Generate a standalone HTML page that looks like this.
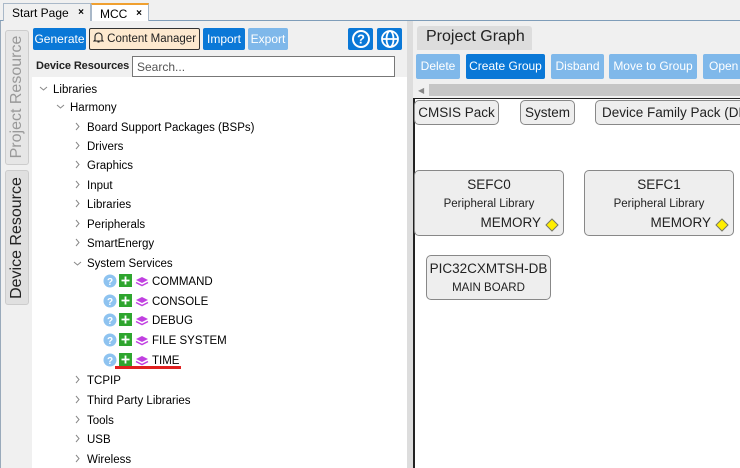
<!DOCTYPE html>
<html><head><style>
*{margin:0;padding:0;box-sizing:border-box}
body{width:740px;height:468px;overflow:hidden;background:#fff;font-family:"Liberation Sans",sans-serif;font-size:12px;color:#000;position:relative}
.a{position:absolute}
.tab{position:absolute;top:3px;height:18px;border:1px solid #a9b8c8;border-bottom:none;font-size:12px;padding:2px 0 0 8px}
.tab b{position:absolute;right:6px;top:3px;font-size:10px}
.btn{position:absolute;height:22px;color:#fff;font-size:12px;text-align:center;line-height:22px;border-radius:2px;white-space:nowrap;overflow:hidden}
.node{position:absolute;background:#eee;border:1px solid #888;border-radius:5px;text-align:center;font-size:13.5px;color:#222;white-space:nowrap;overflow:hidden}
</style></head><body>
<div class="a" style="left:0;top:0;width:740px;height:20px;background:#f0f0f0"></div>
<div class="a" style="left:0;top:20px;width:740px;height:1px;background:#7f9db9"></div>
<div class="tab" style="left:3px;width:88px;background:#f0f0f0">Start Page<b>×</b></div>
<div class="tab" style="left:91px;width:58px;background:#fff;border-top:2px solid #f0a030;height:19px">MCC<b>×</b></div>
<div class="a" style="left:0;top:21px;width:32px;height:447px;background:#f0f0f0;border-left:1px solid #9ab"></div>
<div class="a" style="left:5px;top:30px;width:24px;height:135px;background:#e6e6e6;border:1px solid #ccc;border-radius:3px"></div>
<div class="a" style="left:5px;top:170px;width:24px;height:135px;background:#e0e0e0;border:1px solid #ccc;border-radius:3px"></div>
<div class="a" style="left:17px;top:97px;transform:translate(-50%,-50%) rotate(-90deg);font-size:16px;color:#999;white-space:nowrap">Project Resource</div>
<div class="a" style="left:17px;top:238px;transform:translate(-50%,-50%) rotate(-90deg);font-size:16px;color:#222;white-space:nowrap">Device Resource</div>
<div class="a" style="left:32px;top:21px;width:375px;height:56px;background:#f0f0f0"></div>
<div class="btn" style="left:33px;top:28px;width:53px;background:#0a78d7">Generate</div>
<div class="btn" style="left:89px;top:28px;width:111px;background:#fde9cf;border:1px solid #333;color:#222;line-height:20px;font-size:11.5px"><svg width="11" height="12" viewBox="0 0 11 12" style="vertical-align:-1px" fill="none" stroke="#222" stroke-width="1.1"><path d="M2 9V5.5a3.5 3.5 0 0 1 7 0V9l1 1H1z"/><path d="M4.5 11h2"/></svg> Content Manager</div>
<div class="btn" style="left:203px;top:28px;width:42px;background:#0a78d7">Import</div>
<div class="btn" style="left:248px;top:28px;width:40px;background:#7fb8ea">Export</div>
<div class="btn" style="left:348px;top:28px;width:25px;background:#0a78d7"><svg width="20" height="20" viewBox="0 0 20 20" style="margin-top:1px"><circle cx="10" cy="10" r="8" fill="none" stroke="#fff" stroke-width="2"/><text x="10" y="14.5" text-anchor="middle" fill="#fff" font-size="13" font-weight="bold" font-family="Liberation Sans">?</text></svg></div>
<div class="btn" style="left:377px;top:28px;width:25px;background:#0a78d7"><svg width="20" height="20" viewBox="0 0 20 20" style="margin-top:1px" fill="none" stroke="#fff" stroke-width="1.8"><circle cx="10" cy="10" r="8"/><ellipse cx="10" cy="10" rx="3.5" ry="8"/><line x1="2" y1="10" x2="18" y2="10"/></svg></div>
<div class="a" style="left:36px;top:60px;font-weight:bold;font-size:11px;color:#222;white-space:nowrap;letter-spacing:-0.1px">Device Resources</div>
<div class="a" style="left:132px;top:56px;width:263px;height:21px;border:1px solid #777;background:#fff;font-size:12px;color:#555;padding:3px 4px">Search...</div>
<div class="a" style="left:32px;top:77px;width:375px;height:391px;background:#fff"></div>
<div class="a" style="left:407px;top:21px;width:6px;height:447px;background:#ddd"></div>
<div class="a" style="left:413px;top:21px;width:327px;height:78px;background:#f0f0f0"></div>

<svg class="a" style="left:0;top:0" width="410" height="468">
<g fill="none" stroke="#888" stroke-width="1">
<path d="M40 87l3.5 3 3.5-3M57 105l3.5 3 3.5-3M74 262l3.5 3 3.5-3"/>
<path d="M76 123l3 3.5-3 3.5M76 142l3 3.5-3 3.5M76 161l3 3.5-3 3.5M76 181l3 3.5-3 3.5M76 200l3 3.5-3 3.5M76 220l3 3.5-3 3.5M76 239l3 3.5-3 3.5M76 376l3 3.5-3 3.5M76 396l3 3.5-3 3.5M76 416l3 3.5-3 3.5M76 435l3 3.5-3 3.5M76 455l3 3.5-3 3.5"/>
</g>
<g font-family="Liberation Sans" font-size="11.5" fill="#000">
<text x="53" y="93">Libraries</text>
<text x="70" y="111">Harmony</text>
<text x="87" y="131">Board Support Packages (BSPs)</text>
<text x="87" y="150">Drivers</text>
<text x="87" y="169">Graphics</text>
<text x="87" y="189">Input</text>
<text x="87" y="208">Libraries</text>
<text x="87" y="228">Peripherals</text>
<text x="87" y="247">SmartEnergy</text>
<text x="87" y="267">System Services</text>
<text x="87" y="384">TCPIP</text>
<text x="87" y="404">Third Party Libraries</text>
<text x="87" y="424">Tools</text>
<text x="87" y="443">USB</text>
<text x="87" y="463">Wireless</text>
</g>
<g font-family="Liberation Sans" font-size="11.5">
<g transform="translate(0,281)"><circle cx="110" cy="0" r="6.5" fill="#8ec3f0"/><text x="110" y="4" text-anchor="middle" fill="#fff" font-size="10" font-weight="bold">?</text><rect x="119" y="-7" width="13" height="13" fill="#2ea52e"/><path d="M125.5-4.5v8M121.5-.5h8" stroke="#fff" stroke-width="1.8"/><path d="M136-1l6-3 6 3-6 3z" fill="#c040e0"/><path d="M136 1.5l6 3 6-3" fill="none" stroke="#c040e0" stroke-width="1.5"/><text x="152" y="4">COMMAND</text></g>
<g transform="translate(0,301)"><circle cx="110" cy="0" r="6.5" fill="#8ec3f0"/><text x="110" y="4" text-anchor="middle" fill="#fff" font-size="10" font-weight="bold">?</text><rect x="119" y="-7" width="13" height="13" fill="#2ea52e"/><path d="M125.5-4.5v8M121.5-.5h8" stroke="#fff" stroke-width="1.8"/><path d="M136-1l6-3 6 3-6 3z" fill="#c040e0"/><path d="M136 1.5l6 3 6-3" fill="none" stroke="#c040e0" stroke-width="1.5"/><text x="152" y="4">CONSOLE</text></g>
<g transform="translate(0,320)"><circle cx="110" cy="0" r="6.5" fill="#8ec3f0"/><text x="110" y="4" text-anchor="middle" fill="#fff" font-size="10" font-weight="bold">?</text><rect x="119" y="-7" width="13" height="13" fill="#2ea52e"/><path d="M125.5-4.5v8M121.5-.5h8" stroke="#fff" stroke-width="1.8"/><path d="M136-1l6-3 6 3-6 3z" fill="#c040e0"/><path d="M136 1.5l6 3 6-3" fill="none" stroke="#c040e0" stroke-width="1.5"/><text x="152" y="4">DEBUG</text></g>
<g transform="translate(0,340)"><circle cx="110" cy="0" r="6.5" fill="#8ec3f0"/><text x="110" y="4" text-anchor="middle" fill="#fff" font-size="10" font-weight="bold">?</text><rect x="119" y="-7" width="13" height="13" fill="#2ea52e"/><path d="M125.5-4.5v8M121.5-.5h8" stroke="#fff" stroke-width="1.8"/><path d="M136-1l6-3 6 3-6 3z" fill="#c040e0"/><path d="M136 1.5l6 3 6-3" fill="none" stroke="#c040e0" stroke-width="1.5"/><text x="152" y="4">FILE SYSTEM</text></g>
<g transform="translate(0,360)"><circle cx="110" cy="0" r="6.5" fill="#8ec3f0"/><text x="110" y="4" text-anchor="middle" fill="#fff" font-size="10" font-weight="bold">?</text><rect x="119" y="-7" width="13" height="13" fill="#2ea52e"/><path d="M125.5-4.5v8M121.5-.5h8" stroke="#fff" stroke-width="1.8"/><path d="M136-1l6-3 6 3-6 3z" fill="#c040e0"/><path d="M136 1.5l6 3 6-3" fill="none" stroke="#c040e0" stroke-width="1.5"/><text x="152" y="4">TIME</text></g>
</g>
<rect x="115" y="366" width="66" height="3" fill="#e02020"/>
</svg>

<div class="a" style="left:417px;top:26px;width:115px;height:24px;background:#ddd;border-radius:3px 3px 0 0;font-size:16px;padding:2px 0 0 9px;color:#222">Project Graph</div>
<div class="btn" style="left:416px;top:54px;width:44px;height:25px;line-height:25px;background:#7fb8ea">Delete</div>
<div class="btn" style="left:466px;top:54px;width:79px;height:25px;line-height:25px;background:#0a78d7">Create Group</div>
<div class="btn" style="left:551px;top:54px;width:53px;height:25px;line-height:25px;background:#7fb8ea">Disband</div>
<div class="btn" style="left:609px;top:54px;width:88px;height:25px;line-height:25px;background:#7fb8ea">Move to Group</div>
<div class="btn" style="left:703px;top:54px;width:50px;height:25px;line-height:25px;background:#7fb8ea;text-align:left;padding-left:6px">Open G</div>
<div class="a" style="left:429px;top:84px;width:311px;height:12px;background:#c6c6c6"></div>
<div class="a" style="left:418px;top:86px;font-size:8px;color:#888">◀</div>
<div class="a" style="left:413px;top:98px;width:327px;height:1px;background:#222"></div>
<div class="a" style="left:413px;top:98px;width:2px;height:370px;background:#222"></div>
<div class="node" style="left:414px;top:100px;width:85px;height:25px;line-height:23px">CMSIS Pack</div>
<div class="node" style="left:520px;top:100px;width:55px;height:25px;line-height:23px">System</div>
<div class="node" style="left:595px;top:100px;width:160px;height:25px;line-height:23px;text-align:left;padding-left:6px">Device Family Pack (DFP)</div>
<div class="node" style="left:414px;top:170px;width:150px;height:66px"><div style="margin-top:6px">SEFC0</div><div style="font-size:11.5px;margin-top:6px">Peripheral Library</div><div style="text-align:right;margin:5px 22px 0 0">MEMORY</div><svg class="a" style="right:4px;top:47px" width="14" height="14"><path d="M7 1l6 6-6 6-6-6z" fill="#ffee00" stroke="#776" stroke-width="1"/></svg></div>
<div class="node" style="left:584px;top:170px;width:150px;height:66px"><div style="margin-top:6px">SEFC1</div><div style="font-size:11.5px;margin-top:6px">Peripheral Library</div><div style="text-align:right;margin:5px 22px 0 0">MEMORY</div><svg class="a" style="right:4px;top:47px" width="14" height="14"><path d="M7 1l6 6-6 6-6-6z" fill="#ffee00" stroke="#776" stroke-width="1"/></svg></div>
<div class="node" style="left:426px;top:255px;width:125px;height:45px"><div style="margin-top:5px">PIC32CXMTSH-DB</div><div style="font-size:11.5px;margin-top:6px">MAIN BOARD</div></div>
</body></html>
